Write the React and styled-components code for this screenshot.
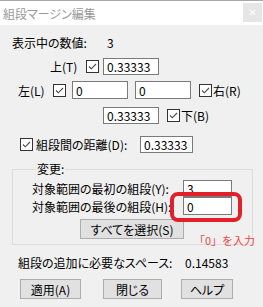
import React from "react"
import styled, { createGlobalStyle } from "styled-components"

const Global = createGlobalStyle`
  html, body {
    margin: 0;
    padding: 0;
    background: #f0f0f0;
  }
  body {
    font-family: "Liberation Sans Narrow", "Noto Sans CJK JP", sans-serif;
    font-size: 12px;
    font-feature-settings: "palt";
    color: #000;
  }
`

const Window = styled.div`
  position: relative;
  width: 263px;
  height: 307px;
  background: #f0f0f0;
  overflow: hidden;
`

const TitleBar = styled.div`
  height: 24px;
  border-top: 1px solid #a8a8a8;
  background: #fff;
  display: flex;
  align-items: center;
  justify-content: space-between;
  padding-left: 3px;
`

const Title = styled.span`
  font-family: "Noto Sans CJK JP", sans-serif;
  font-size: 12px;
  color: #9a9a9a;
`

const CloseBtn = styled.div`
  width: 19px;
  height: 19px;
  margin-right: 1px;
  margin-top: -2px;
  background: #e6e6e6;
  display: flex;
  align-items: center;
  justify-content: center;
  color: #fff;
  font-size: 10px;
  font-family: "DejaVu Sans", sans-serif;
`

const Body = styled.div`
  padding: 10px 0 0 12px;
`

const Row = styled.div`
  display: flex;
  align-items: center;
  gap: ${p => p.gap ?? 5}px;
  height: ${p => p.h ?? 18}px;
  padding-left: ${p => p.indent ?? 0}px;
  margin-top: ${p => p.top ?? 0}px;
`

const Label = styled.span`
  white-space: nowrap;
  width: ${p => (p.w ? p.w + "px" : "auto")};
  margin-left: ${p => p.ml ?? 0}px;
`

const Value = styled.span`
  padding-left: ${p => p.pad ?? 0}px;
`

const Input = styled.div`
  box-sizing: border-box;
  width: ${p => p.w ?? 56}px;
  height: ${p => p.h ?? 17}px;
  margin-left: ${p => p.ml ?? 0}px;
  border: 1px solid #7a7a7a;
  background: #fff;
  padding: 0 3px;
  display: flex;
  align-items: center;
  font-size: 12px;
`

const Box = styled.span`
  box-sizing: border-box;
  width: 13px;
  height: 13px;
  margin-left: ${p => p.ml ?? 0}px;
  border: 1px solid #333;
  background: #fff;
  display: inline-flex;
  align-items: center;
  justify-content: center;
  flex: none;
`

const Check = ({ ml }) => (
  <Box ml={ml}>
    <svg width="11" height="11" viewBox="0 0 11 11">
      <path d="M2 5.5 L4.3 7.8 L9 3" fill="none" stroke="#4a4a4a" strokeWidth="1.1" />
    </svg>
  </Box>
)

const Group = styled.fieldset`
  box-sizing: border-box;
  width: 241px;
  height: 82px;
  margin: 10px 0 0 0;
  padding: 0 0 0 19px;
  border: 1px solid #dcdcdc;
`

const Legend = styled.legend`
  padding: 0 1px;
  margin-left: 4px;
  line-height: 12px;
`

const Button = styled.div`
  box-sizing: border-box;
  width: ${p => p.w ?? 61}px;
  height: 20px;
  margin-left: ${p => p.ml ?? 0}px;
  background: #e1e1e1;
  border: 1px solid #adadad;
  display: flex;
  align-items: center;
  justify-content: center;
`

const Buttons = styled.div`
  display: flex;
  padding-left: ${p => p.indent ?? 0}px;
  margin-top: ${p => p.top ?? 0}px;
`

const Highlight = styled.div`
  position: absolute;
  left: 170px;
  top: 192px;
  width: 72px;
  height: 30px;
  box-sizing: border-box;
  border: 4px solid #e3202a;
  border-radius: 8px;
`

const Note = styled.div`
  position: absolute;
  left: 194px;
  top: 232px;
  font-family: "Noto Sans CJK JP", sans-serif;
  font-size: 11px;
  font-feature-settings: normal;
  color: #f04848;
  white-space: nowrap;
`

export default function App() {
  return (
    <Window>
      <Global />
      <TitleBar>
        <Title>組段マージン編集</Title>
        <CloseBtn>✕</CloseBtn>
      </TitleBar>
      <Body>
        <Row h={14}>
          <Label w={86}>表示中の数値:</Label>
          <Value pad={4}>3</Value>
        </Row>
        <Row indent={38} top={9} h={17} gap={4}>
          <Label w={32}>上(T)</Label>
          <Check />
          <Input>0.33333</Input>
        </Row>
        <Row indent={6} top={6} h={18} gap={6}>
          <Label w={29}>左(L)</Label>
          <Check />
          <Input h={18}>0</Input>
          <Input h={18} ml={1}>0</Input>
          <Check ml={2} />
          <Label ml={-5}>右(R)</Label>
        </Row>
        <Row indent={91} top={8} h={17} gap={8}>
          <Input>0.33333</Input>
          <Check />
          <Label ml={-7}>下(B)</Label>
        </Row>
        <Row indent={8} top={12} h={17} gap={3}>
          <Check />
          <Label w={101}>組段間の距離(D):</Label>
          <Input w={53}>0.33333</Input>
        </Row>
        <Group>
          <Legend>変更:</Legend>
          <Row top={4} h={18} gap={10}>
            <Label w={141}>対象範囲の最初の組段(Y):</Label>
            <Input w={49}>3</Input>
          </Row>
          <Row top={0} h={18} gap={10}>
            <Label w={141}>対象範囲の最後の組段(H):</Label>
            <Input w={49} h={18}>0</Input>
          </Row>
          <Buttons indent={48} top={4}>
            <Button w={104}>すべてを選択(S)</Button>
          </Buttons>
        </Group>
        <Row indent={6} top={11} h={12}>
          <Label w={162}>組段の追加に必要なスペース:</Label>
          <Value>0.14583</Value>
        </Row>
        <Buttons indent={8} top={11}>
          <Button w={61}>適用(A)</Button>
          <Button w={59} ml={22}>閉じる</Button>
          <Button w={52} ml={19}>ヘルプ</Button>
        </Buttons>
      </Body>
      <Highlight />
      <Note>「0」を入力</Note>
    </Window>
  )
}
